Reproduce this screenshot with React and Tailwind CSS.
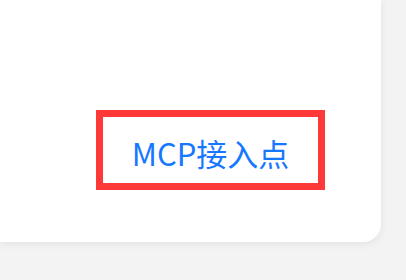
export default function App() {
  return (
    <div className="w-[406px] h-[280px] bg-[#f3f3f3] overflow-hidden">
      <div className="w-[381px] h-[242px] bg-white rounded-br-[18px] shadow-[0_2px_8px_rgba(0,0,0,0.07)] pt-[110px] pl-[96px]">
        <div className="w-[229px] h-[80px] border-[7px] border-[#ff3838] flex items-center justify-center pt-[4px]">
          <span className="text-[31px] leading-none text-[#1677ff] font-['Noto_Sans_CJK_SC','Noto_Sans',sans-serif]">
            MCP接入点
          </span>
        </div>
      </div>
    </div>
  )
}
